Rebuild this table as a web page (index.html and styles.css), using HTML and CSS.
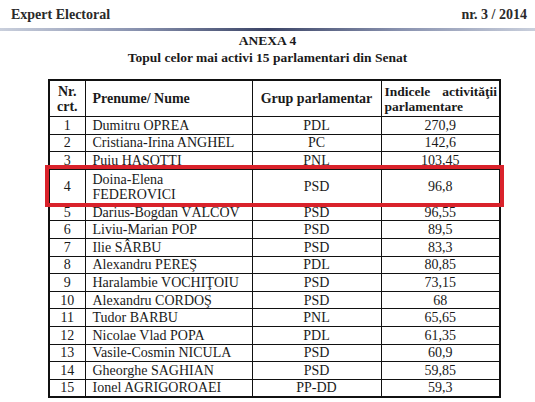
FILE: index.html
```html
<!DOCTYPE html>
<html lang="ro">
<head>
    <meta charset="UTF-8">
    <meta name="viewport" content="width=device-width, initial-scale=1.0">
    <title>Expert Electoral - Anexa 4</title>
    <link rel="stylesheet" href="styles.css">
</head>
<body>
    <header class="page-header">
        <span class="journal">Expert Electoral</span>
        <span class="issue">nr. 3 / 2014</span>
    </header>
    <div class="header-rule"></div>

    <div class="annex">
        <h1>ANEXA 4</h1>
        <h2>Topul celor mai activi 15 parlamentari din Senat</h2>
    </div>

    <table class="ranking">
        <thead>
            <tr>
                <th class="col-nr">Nr.<br>crt.</th>
                <th class="col-name">Prenume/ Nume</th>
                <th class="col-group">Grup parlamentar</th>
                <th class="col-index">Indicele activităţii parlamentare</th>
            </tr>
        </thead>
        <tbody>
            <tr><td>1</td><td class="name">Dumitru OPREA</td><td>PDL</td><td>270,9</td></tr>
            <tr><td>2</td><td class="name">Cristiana-Irina ANGHEL</td><td>PC</td><td>142,6</td></tr>
            <tr><td>3</td><td class="name">Puiu HAŞOTTI</td><td>PNL</td><td>103,45</td></tr>
            <tr class="highlight"><td>4</td><td class="name">Doina-Elena<br>FEDEROVICI</td><td>PSD</td><td>96,8</td></tr>
            <tr><td>5</td><td class="name">Darius-Bogdan VÂLCOV</td><td>PSD</td><td>96,55</td></tr>
            <tr><td>6</td><td class="name">Liviu-Marian POP</td><td>PSD</td><td>89,5</td></tr>
            <tr><td>7</td><td class="name">Ilie SÂRBU</td><td>PSD</td><td>83,3</td></tr>
            <tr><td>8</td><td class="name">Alexandru PEREŞ</td><td>PDL</td><td>80,85</td></tr>
            <tr><td>9</td><td class="name">Haralambie VOCHIŢOIU</td><td>PSD</td><td>73,15</td></tr>
            <tr><td>10</td><td class="name">Alexandru CORDOŞ</td><td>PSD</td><td>68</td></tr>
            <tr><td>11</td><td class="name">Tudor BARBU</td><td>PNL</td><td>65,65</td></tr>
            <tr><td>12</td><td class="name">Nicolae Vlad POPA</td><td>PDL</td><td>61,35</td></tr>
            <tr><td>13</td><td class="name">Vasile-Cosmin NICULA</td><td>PSD</td><td>60,9</td></tr>
            <tr><td>14</td><td class="name">Gheorghe SAGHIAN</td><td>PSD</td><td>59,85</td></tr>
            <tr><td>15</td><td class="name">Ionel AGRIGOROAEI</td><td>PP-DD</td><td>59,3</td></tr>
        </tbody>
    </table>
</body>
</html>
```

FILE: styles.css
```css
* {
    margin: 0;
    padding: 0;
    box-sizing: border-box;
}

body {
    font-family: 'Liberation Serif', 'Times New Roman', serif;
    background: #fff;
    color: #1a1a1a;
    width: 535px;
}

.page-header {
    display: flex;
    justify-content: space-between;
    align-items: baseline;
    padding: 7px 8px 0 11px;
    height: 27px;
    font-size: 14px;
    font-weight: bold;
    color: #2a2a2a;
}

.header-rule {
    height: 3px;
    margin-top: 1px;
    background: linear-gradient(90deg, #c9cfdc 0%, #8a93b0 25%, #3b4466 50%, #8a93b0 75%, #c9cfdc 100%);
}

.annex {
    text-align: center;
    margin-top: 1px;
    font-weight: bold;
}

.annex h1,
.annex h2 {
    font-size: 13.5px;
    line-height: 17px;
    font-weight: bold;
}

.ranking {
    margin: 13px 0 0 48px;
    width: 451px;
    border-collapse: collapse;
    border: 2px solid #111;
    font-family: 'Liberation Serif', 'Times New Roman', serif;
    font-size: 14px;
    table-layout: fixed;
}

.ranking tr {
    height: 17.6px;
}

.ranking th,
.ranking td {
    border: 1.5px solid #111;
    text-align: center;
    line-height: 14px;
    padding: 1px 0 0;
}

.ranking thead tr {
    height: 36.5px;
}

.ranking th {
    font-weight: bold;
    line-height: 15px;
    padding: 0;
}

.col-nr { width: 36px; }
.col-name { width: 167px; text-align: left !important; padding-left: 7px !important; }
.col-group { width: 129px; }
.col-index {
    width: 119px;
    font-size: 13.5px;
    text-align: justify !important;
    text-align-last: left;
    padding: 0 2px 0 3px !important;
}

.ranking td.name {
    text-align: left;
    padding-left: 7px;
}

.ranking tr.highlight {
    height: 34px;
    outline: 4px solid #d9222b;
    outline-offset: 0;
}

.ranking tr.highlight td {
    line-height: 15px;
}
```
